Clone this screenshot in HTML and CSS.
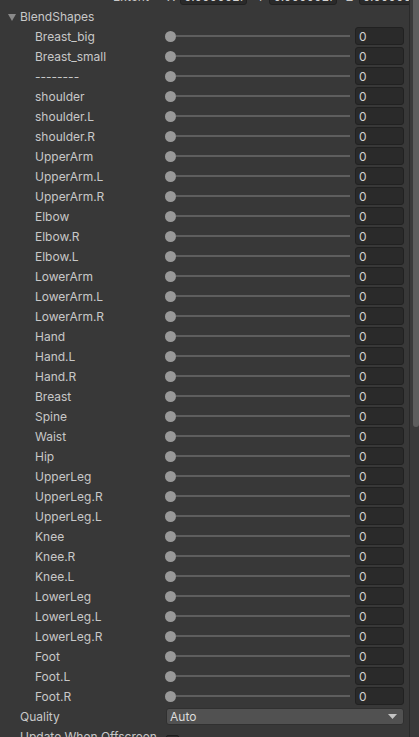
FILE: index.html
```html
<!DOCTYPE html>
<html>
<head>
<meta charset="utf-8">
<link rel="stylesheet" href="styles.css">
</head>
<body>
<div class="frame">
  <div class="main">
    <div class="row extent">
      <div class="label ext-label">Extent</div>
      <div class="vec">
        <span class="axis">X</span><div class="field vfield">0.0000027</div>
        <span class="axis">Y</span><div class="field vfield">0.0000027</div>
        <span class="axis">Z</span><div class="field vfield">0.0000027</div>
      </div>
    </div>
    <div class="row">
      <div class="label top fold"><svg class="tri" width="8" height="7" viewBox="0 0 8 7"><polygon points="0,0 8,0 4,7" fill="#8a8a8a"/></svg>BlendShapes</div>
    </div>
    <div id="list"></div>
    <div class="row">
      <div class="label top">Quality</div>
      <div class="ctrl"><div class="popup"><span>Auto</span><svg width="9" height="5" viewBox="0 0 9 5"><polygon points="0,0 9,0 4.5,5" fill="#c4c4c4"/></svg></div></div>
    </div>
    <div class="row">
      <div class="label top">Update When Offscreen</div>
      <div class="ctrl"><div class="check"></div></div>
    </div>
  </div>
  <div class="scroll"><div class="thumb"></div></div>
</div>
<script src="app.js"></script>
</body>
</html>
```
FILE: app.js
```js
var names = ["Breast_big","Breast_small","--------","shoulder","shoulder.L","shoulder.R","UpperArm","UpperArm.L","UpperArm.R","Elbow","Elbow.R","Elbow.L","LowerArm","LowerArm.L","LowerArm.R","Hand","Hand.L","Hand.R","Breast","Spine","Waist","Hip","UpperLeg","UpperLeg.R","UpperLeg.L","Knee","Knee.R","Knee.L","LowerLeg","LowerLeg.L","LowerLeg.R","Foot","Foot.L","Foot.R"];
var list = document.getElementById("list");
var html = "";
for (var i = 0; i < names.length; i++) {
  html += '<div class="row"><div class="label sub">' + names[i] + '</div><div class="ctrl"><div class="slider"><div class="knob"></div><div class="track"></div></div><div class="field num">0</div></div></div>';
}
list.innerHTML = html;
```
FILE: styles.css
```css
html, body {
  margin: 0;
  padding: 0;
  background: #383838;
  overflow: hidden;
}
body {
  width: 419px;
  height: 737px;
  font-family: Inter, "Noto Sans", sans-serif;
  font-size: 12px;
  color: #c8c8c8;
}
.frame {
  display: flex;
  height: 737px;
  overflow: hidden;
}
.main {
  width: 409px;
  margin-top: -14px;
  display: flex;
  flex-direction: column;
}
.row {
  height: 20px;
  display: flex;
  align-items: center;
  flex-shrink: 0;
}
.label {
  width: 165px;
  height: 20px;
  box-sizing: border-box;
  white-space: nowrap;
  flex-shrink: 0;
  padding-top: 2px;
  line-height: 18px;
}
.label.top { padding-left: 20px; }
.label.sub { padding-left: 35px; }
.label.fold {
  padding-left: 8px;
  display: flex;
  align-items: center;
  width: auto;
}
.tri { margin-right: 4px; margin-top: 0; }
.ext-label { padding-left: 113px; }
.ctrl {
  flex: 1;
  display: flex;
  align-items: center;
  padding-right: 5px;
}
.vec {
  flex: 1;
  display: flex;
  align-items: center;
  padding-right: 5px;
}
.axis {
  width: 15px;
  padding-left: 2px;
  box-sizing: border-box;
  text-align: left;
}
.vfield {
  flex: 1;
  margin-right: 7px;
}
.vfield:last-child { margin-right: 0; }
.slider {
  flex: 1;
  display: flex;
  align-items: center;
  margin-right: 5px;
}
.knob {
  width: 11px;
  height: 11px;
  border-radius: 50%;
  background: #999999;
  flex-shrink: 0;
}
.track {
  flex: 1;
  height: 2px;
  background: #5e5e5e;
}
.field {
  height: 18px;
  box-sizing: border-box;
  background: #2a2a2a;
  border: 1px solid #212121;
  border-radius: 3px;
  padding-left: 3px;
  padding-top: 1px;
  line-height: 16px;
  color: #d2d2d2;
  overflow: hidden;
  white-space: nowrap;
}
.num { width: 49px; flex-shrink: 0; }
.popup {
  flex: 1;
  height: 17px;
  box-sizing: border-box;
  margin-left: 1px;
  background: #515151;
  border: 1px solid #303030;
  border-radius: 3px;
  display: flex;
  align-items: center;
  justify-content: space-between;
  padding: 0 6px 0 3px;
  color: #dcdcdc;
}
.check {
  margin-left: 1px;
  margin-top: 10px;
  width: 13px;
  height: 13px;
  box-sizing: border-box;
  background: #2a2a2a;
  border: 1px solid #1e1e1e;
  border-radius: 2px;
}
.scroll {
  width: 10px;
  box-sizing: border-box;
  border-left: 1px solid #2a2a2a;
  background: #3a3a3a;
  padding-left: 3px;
}
.thumb {
  height: 427px;
  background: #5d5d5d;
  border-radius: 0 0 3px 3px;
}
```
